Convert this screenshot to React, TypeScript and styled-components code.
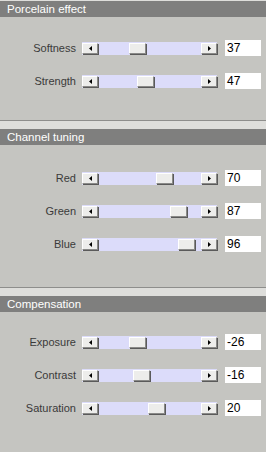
import styled, { createGlobalStyle } from "styled-components";

const GlobalStyle = createGlobalStyle`
  html, body {
    margin: 0;
    padding: 0;
    background: #c5c5c1;
  }
  body {
    font-family: "Liberation Sans", Arial, sans-serif;
  }
`;

type Param = { label: string; value: number; min: number; max: number };

const sections: { title: string; height: number; pad: number; params: Param[] }[] = [
  {
    title: "Porcelain effect",
    height: 120,
    pad: 23,
    params: [
      { label: "Softness", value: 37, min: 0, max: 100 },
      { label: "Strength", value: 47, min: 0, max: 100 },
    ],
  },
  {
    title: "Channel tuning",
    height: 167,
    pad: 25,
    params: [
      { label: "Red", value: 70, min: 0, max: 100 },
      { label: "Green", value: 87, min: 0, max: 100 },
      { label: "Blue", value: 96, min: 0, max: 100 },
    ],
  },
  {
    title: "Compensation",
    height: 165,
    pad: 22,
    params: [
      { label: "Exposure", value: -26, min: -100, max: 100 },
      { label: "Contrast", value: -16, min: -100, max: 100 },
      { label: "Saturation", value: 20, min: -100, max: 100 },
    ],
  },
];

const TRACK = 101;
const THUMB = 18;

const Arrow = ({ dir }: { dir: "left" | "right" }) => (
  <svg width="3" height="5" viewBox="0 0 3 5">
    {dir === "left" ? (
      <path d="M3 0 L0 2.5 L3 5 Z" fill="#000" />
    ) : (
      <path d="M0 0 L3 2.5 L0 5 Z" fill="#000" />
    )}
  </svg>
);

const Slider = ({ p }: { p: Param }) => {
  const frac = (p.value - p.min) / (p.max - p.min);
  const left = Math.round((TRACK - THUMB) * frac);
  return (
    <SliderBar>
      <StepButton>
        <Arrow dir="left" />
      </StepButton>
      <Track>
        <Thumb style={{ left }} />
      </Track>
      <StepButton>
        <Arrow dir="right" />
      </StepButton>
    </SliderBar>
  );
};

export default function App() {
  return (
    <>
      <GlobalStyle />
      <Page>
        {sections.map((s, i) => (
          <Section key={s.title} $first={i === 0} $height={s.height}>
            <Header>{s.title}</Header>
            <Body $pad={s.pad}>
              {s.params.map((p) => (
                <Row key={p.label}>
                  <Label>{p.label}</Label>
                  <Slider p={p} />
                  <ValueBox>{p.value}</ValueBox>
                </Row>
              ))}
            </Body>
          </Section>
        ))}
      </Page>
    </>
  );
}

const Page = styled.div`
  width: 266px;
  height: 452px;
  display: flex;
  flex-direction: column;
  background: #c5c5c1;
  overflow: hidden;
`;

const Section = styled.section<{ $first: boolean; $height: number }>`
  display: flex;
  flex-direction: column;
  height: ${(p) => p.$height}px;
  flex-shrink: 0;
  border-top: ${(p) => (p.$first ? "none" : "1px solid #8e8e8c")};
  padding-top: ${(p) => (p.$first ? "1px" : "8px")};
  background: linear-gradient(
    #dededb 0,
    #dededb ${(p) => (p.$first ? "1px" : "8px")},
    #c5c5c1 ${(p) => (p.$first ? "1px" : "8px")}
  );
  box-sizing: border-box;
`;

const Header = styled.div`
  height: 16px;
  line-height: 16px;
  background: #7f7f7e;
  color: #fff;
  font-size: 11.5px;
  padding-left: 7px;
`;

const Body = styled.div<{ $pad: number }>`
  display: flex;
  flex-direction: column;
  gap: 17px;
  padding-top: ${(p) => p.$pad}px;
`;

const Row = styled.div`
  display: flex;
  align-items: center;
  height: 16px;
`;

const Label = styled.span`
  width: 76px;
  text-align: right;
  font-size: 11px;
  color: #3a3a3a;
  padding-right: 6px;
`;

const SliderBar = styled.div`
  display: flex;
  align-items: center;
  width: 135px;
  height: 13px;
  background: #dcdcfa;
`;

const raised = `
  box-sizing: border-box;
  background: #ededeb;
  border-top: 1px solid #ffffff;
  border-left: 1px solid #ffffff;
  border-right: 1px solid #8a8a88;
  border-bottom: 1px solid #8a8a88;
  box-shadow: 1px 1px 0 #5a5a5a;
`;

const StepButton = styled.div`
  ${raised}
  width: 16px;
  height: 11px;
  display: flex;
  align-items: center;
  justify-content: center;
  flex-shrink: 0;
  padding-left: 1px;
`;

const Track = styled.div`
  position: relative;
  flex: 1;
  height: 13px;
`;

const Thumb = styled.div`
  ${raised}
  position: absolute;
  top: 1px;
  width: ${THUMB - 1}px;
  height: 11px;
`;

const ValueBox = styled.div`
  box-sizing: border-box;
  margin-left: 8px;
  width: 36px;
  height: 16px;
  background: #fff;
  color: #000;
  font-size: 12px;
  line-height: 16px;
  padding-left: 2px;
`;
